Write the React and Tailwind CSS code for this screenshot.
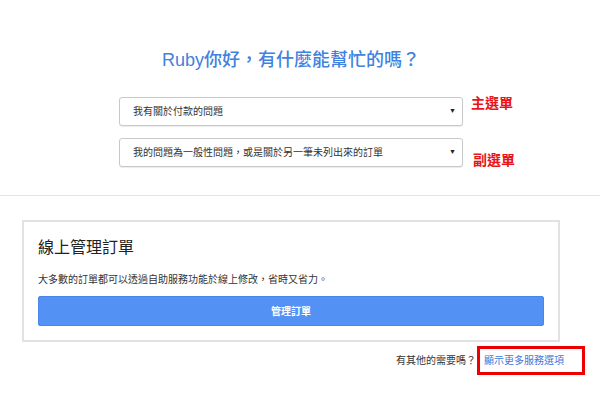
const FONT = { fontFamily: '"Liberation Sans", "Noto Sans CJK TC", sans-serif' };

const Select = ({ text }) => (
  <div className="w-[344px] h-[29px] border border-[#c9c9c9] rounded-[3px] bg-white shadow-[0_1px_1px_rgba(0,0,0,0.08)] flex items-center justify-between pl-[13px] pr-[6px]">
    <span className="text-[10px] text-[#333]">{text}</span>
    <span className="text-[7px] text-[#222]">▼</span>
  </div>
);

export default function App() {
  return (
    <div lang="zh-Hant-TW" className="w-[600px] h-[411px] bg-white overflow-hidden" style={FONT}>
      <div className="w-[582px]">
        <h1 className="pt-[48px] text-center text-[18px] leading-[24px] font-medium text-[#3f82e0]">
          Ruby你好，有什麼能幫忙的嗎？
        </h1>

        <div className="mt-[25px] flex items-start pl-[119px]">
          <Select text="我有關於付款的問題" />
          <span className="ml-[8px] -mt-[4px] text-[14px] font-bold text-[#e8141b]">主選單</span>
        </div>
        <div className="mt-[12px] flex items-start pl-[119px]">
          <Select text="我的問題為一般性問題，或是關於另一筆未列出來的訂單" />
          <span className="ml-[10px] mt-[12px] text-[14px] font-bold text-[#e8141b]">副選單</span>
        </div>
      </div>

      <div className="mt-[24px] border-t border-[#e3e3e3]" />

      <div className="ml-[22px] mt-[24px] w-[538px] h-[122px] border-2 border-[#e2e2e2] px-[14px] pt-[16px]">
        <h2 className="text-[16px] leading-[20px] text-[#222]">線上管理訂單</h2>
        <p className="mt-[15px] text-[10px] leading-[14px] text-[#333]">
          大多數的訂單都可以透過自助服務功能於線上修改，省時又省力。
        </p>
        <button className="mt-[9px] w-full h-[30px] rounded-[2px] bg-[#5491f5] border border-[#4a86ea] text-white text-[10px] font-bold">
          管理訂單
        </button>
      </div>

      <div className="mt-[4px] flex items-center justify-end pr-[15px]">
        <span className="text-[10px] text-[#333] mr-[1px]">有其他的需要嗎？</span>
        <div className="w-[108px] h-[29px] border-[3px] border-[#ee0000] flex items-center pl-[4px]">
          <span className="text-[10px] text-[#3d78d8]">顯示更多服務選項</span>
        </div>
      </div>
    </div>
  );
}
